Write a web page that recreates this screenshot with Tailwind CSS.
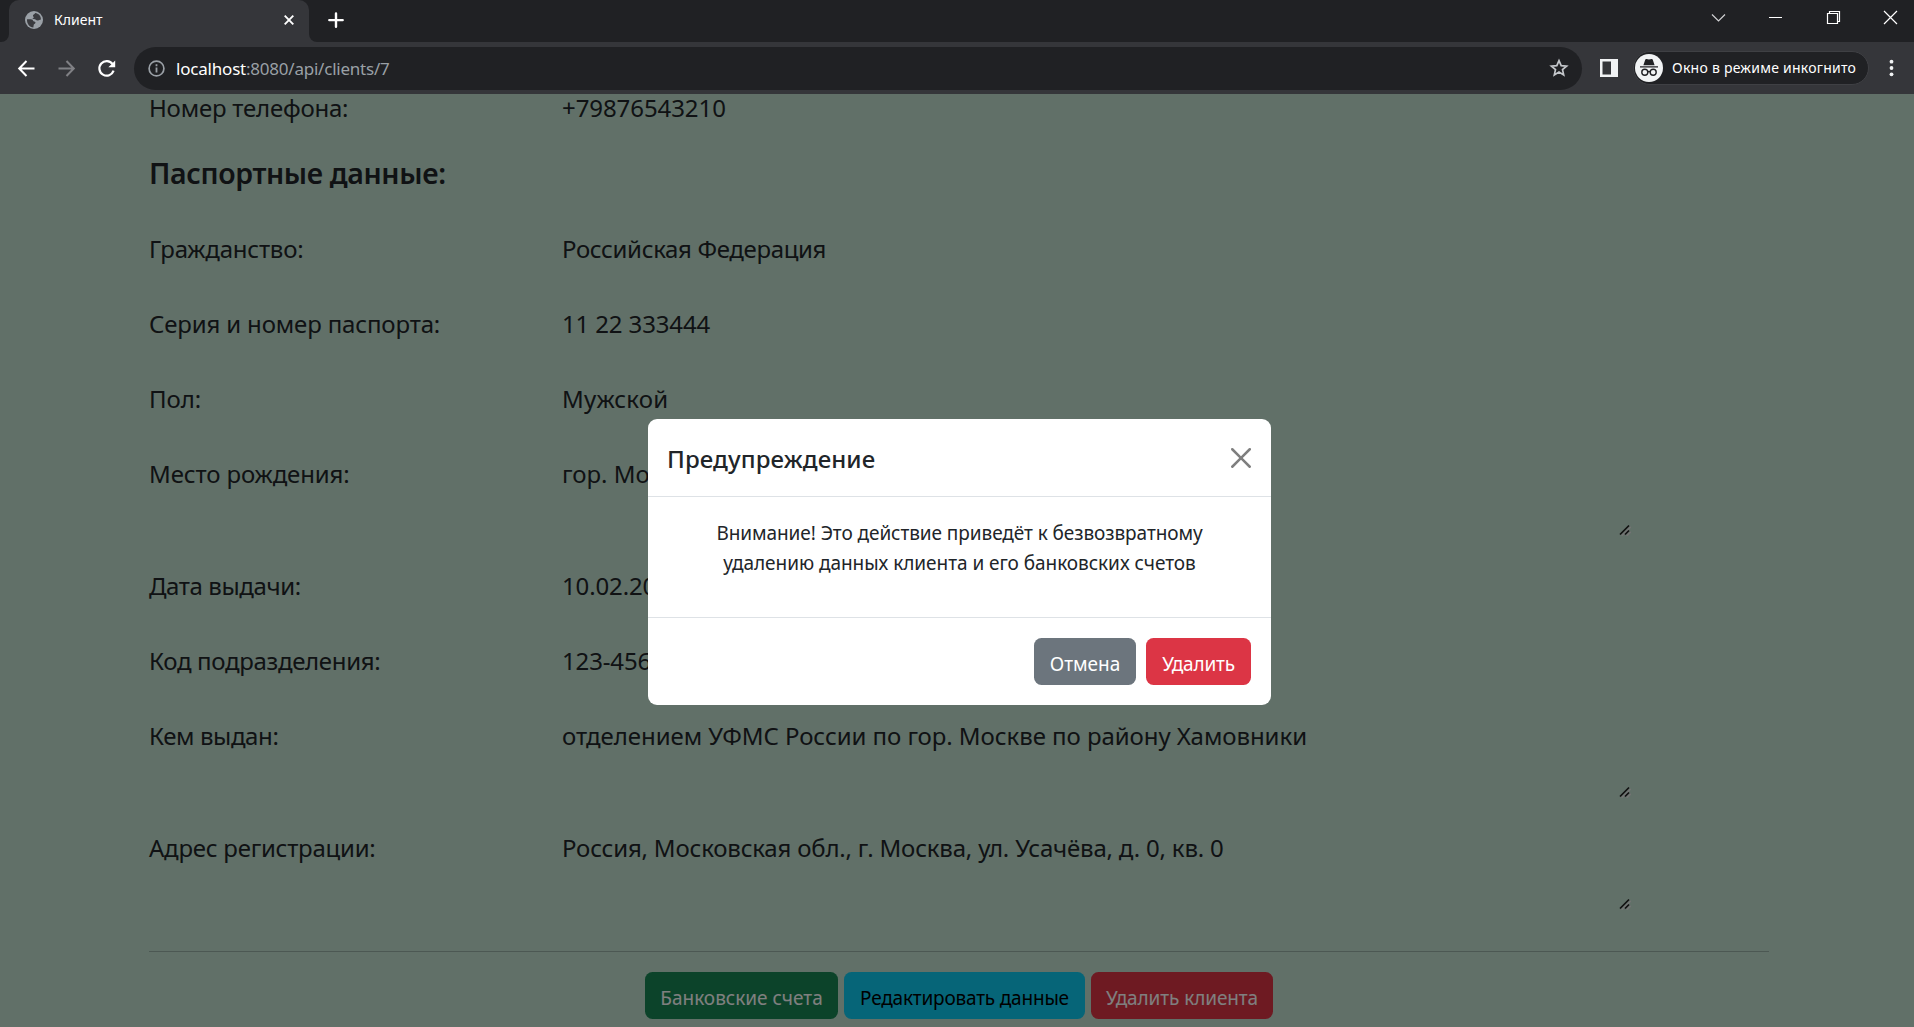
<!DOCTYPE html>
<html lang="ru">
<head>
<meta charset="utf-8">
<title>Клиент</title>
<script src="https://cdn.jsdelivr.net/npm/@tailwindcss/browser@4"></script>
</head>
<body class="flex h-[1027px] w-[1914px] flex-col overflow-hidden bg-[#c2e0d0] font-['Noto_Sans','Open_Sans',sans-serif] text-[#212529]">

<!-- Tab strip -->
<header class="flex h-[42px] shrink-0 bg-[#202124] text-white">
  <div class="w-[9px] bg-[#35363a]"><div class="h-full rounded-br-[8px] bg-[#202124]"></div></div>
  <div class="flex h-full w-[300px] items-center rounded-t-[10px] bg-[#35363a] pb-[2px] pl-4 pr-[14px]">
    <svg class="size-[18px] shrink-0" viewBox="0 0 18 18"><circle cx="9" cy="9" r="9" fill="#9aa0a6"/><path d="M2 8.200C3.500 8.300 5.500 8 7 8.600c1.300.5.900 1.900 2.200 2 1 .1 1.500.6 1.200 1.500-.3 1-1.500.9-1.700 2-.1.800-.2 1.500-.4 2.300C4.600 16 1.700 13 2 8.200ZM10.200 2C9.800 3 8.300 3.300 8 4.300c-.300 1 .8 1.300.7 2.200-.1.800-1.100.8-1.200 1.400.9.300 2.200 0 3 .700.6.600 1.500 1 2.500.9 1.100-.1 1.700-.8 2.900-.9C16.100 5 13.500 2.300 10.200 2Z" fill="#3a3b3f"/></svg>
    <span class="ml-[11px] grow text-[14px] leading-5">Клиент</span>
    <svg class="size-3" viewBox="0 0 12 12" stroke="#fff" stroke-width="1.9"><path d="M1.700 1.700 10.300 10.300M10.300 1.700 1.700 10.300"/></svg>
  </div>
  <div class="w-[10px] bg-[#35363a]"><div class="h-full rounded-bl-[8px] bg-[#202124]"></div></div>
  <svg class="ml-[9px] mt-3 size-4" viewBox="0 0 16 16" stroke="#fff" stroke-width="2.400" stroke-linecap="round"><path d="M8 1.400V14.800M1.300 8.100H14.700"/></svg>
  <div class="ml-auto flex items-start gap-[42.500px] pr-[16px] pt-[10px]">
    <svg class="size-[15px]" viewBox="0 0 15 15" fill="none" stroke="#d0d1d3" stroke-width="1.200"><path d="M1 4.500 7.500 11 14 4.500"/></svg>
    <svg class="size-[15px]" viewBox="0 0 15 15" stroke="#fff"><path d="M1 7.500H14"/></svg>
    <svg class="size-[15px]" viewBox="0 0 15 15" fill="none" stroke="#fff" stroke-width="1.200"><path d="M1.500 3.500H11.500V13.500H1.500ZM3.500 3.500V1.500H13.500V11.500H11.500"/></svg>
    <svg class="size-[15px]" viewBox="0 0 15 15" stroke="#fff" stroke-width="1.200"><path d="M1 1 14 14M14 1 1 14"/></svg>
  </div>
</header>

<!-- Toolbar -->
<nav class="flex h-[52px] shrink-0 items-center bg-[#35363a] pl-[17px] pr-[14px]">
  <div class="flex gap-[21px]">
    <svg class="size-[19px]" viewBox="0 0 19 19" fill="none" stroke="#fff" stroke-width="2"><path d="M17.500 9.500H2.500M9.500 2 2.200 9.500 9.500 17"/></svg>
    <svg class="size-[19px]" viewBox="0 0 19 19" fill="none" stroke="#808185" stroke-width="2"><path d="M1.500 9.500H16.500M9.500 2 16.800 9.500 9.500 17"/></svg>
    <svg class="size-[19px]" viewBox="0 0 19 19"><path d="M15.600 5.100A7.300 7.300 0 1 0 16.600 11.700" fill="none" stroke="#fff" stroke-width="2.200"/><path d="M18.200 1.500V8.200H11.400Z" fill="#fff"/></svg>
  </div>
  <div class="ml-[18px] flex h-[43px] w-[1448px] items-center rounded-full bg-[#202124] pl-[14px] pr-[13px]">
    <svg class="size-[17px]" viewBox="0 0 17 17"><circle cx="8.500" cy="8.500" r="7.400" fill="none" stroke="#9aa0a6" stroke-width="1.700"/><path d="M7.600 7.600h1.800v5H7.600ZM7.600 4.300h1.800v1.900H7.600Z" fill="#9aa0a6"/></svg>
    <p class="ml-[11px] grow pt-px text-[17px] leading-6 text-[#9aa0a6]"><span class="tracking-[-0.2px] text-white">localhost</span><span class="tracking-[-0.23px]">:8080/api/clients/7</span></p>
    <svg class="size-5" viewBox="0 0 20 20" fill="none" stroke="#c4c7cb" stroke-width="1.700"><path d="M10 2.700 12.200 7.600 17.600 8.100 13.500 11.600 14.700 16.900 10 14.100 5.300 16.900 6.500 11.600 2.400 8.100 7.800 7.600Z"/></svg>
  </div>
  <svg class="ml-[18px] size-[18px]" viewBox="0 0 18 18"><path d="M0 0H18V18H0ZM2.500 2.500V15.500H11V2.500Z" fill="#f1f3f4" fill-rule="evenodd"/></svg>
  <div class="ml-[15px] flex h-[34px] w-[236px] items-center rounded-full border border-[#3f4044] bg-[#202124]">
    <svg class="ml-px size-7" viewBox="0 0 28 28"><circle cx="14" cy="14" r="14" fill="#f1f3f4"/><path d="M5 12.200H23V13.500H5ZM8.400 11.200 10.300 5.600c.2-.6.700-.8 1.300-.6l2.400.5 2.400-.5c.600-.200 1.100 0 1.300.600l1.900 5.600Z" fill="#202124"/><g fill="none" stroke="#202124" stroke-width="1.400"><circle cx="9.800" cy="18.300" r="3"/><circle cx="18.200" cy="18.300" r="3"/><path d="M12.800 17.800q1.200-.7 2.400 0"/></g></svg>
    <span class="ml-[9px] whitespace-nowrap text-[14px] leading-5 tracking-[0.25px] text-white">Окно в режиме инкогнито</span>
  </div>
  <svg class="ml-auto h-[18px] w-[17px]" viewBox="0 0 17 18" fill="#f1f3f4"><circle cx="8.500" cy="2.700" r="1.900"/><circle cx="8.500" cy="9" r="1.900"/><circle cx="8.500" cy="15.300" r="1.900"/></svg>
</nav>

<!-- Page -->
<div class="relative grow">
  <main class="ml-[149px] w-[1620px] text-[24px] leading-[37px]">
    <dl class="flex h-[27px] items-center"><dt class="w-[413px] tracking-[-0.21px]">Номер телефона:</dt><dd class="tracking-[-0.08px]">+79876543210</dd></dl>
    <h4 class="mt-[14px] h-[76px] text-[28.5px] font-semibold leading-[76px] tracking-[-0.36px]">Паспортные данные:</h4>
    <dl>
      <div class="flex h-[75px] items-center"><dt class="w-[413px] tracking-[-0.22px]">Гражданство:</dt><dd class="tracking-[-0.35px]">Российская Федерация</dd></div>
      <div class="flex h-[75px] items-center"><dt class="w-[413px] tracking-[-0.15px]">Серия и номер паспорта:</dt><dd class="tracking-[-0.14px]">11 22 333444</dd></div>
      <div class="flex h-[75px] items-center"><dt class="w-[413px] tracking-[-0.1px]">Пол:</dt><dd class="tracking-[0.2px]">Мужской</dd></div>
      <div class="flex h-[112px] pt-[19px]"><dt class="w-[413px] tracking-[-0.13px]">Место рождения:</dt><dd class="flex w-[1069px] items-end justify-between"><span class="self-start">гор. Москва</span><svg class="mb-[12px] size-[12px]" viewBox="0 0 12 12"><path d="M2 11 11 2M7 11 11 7" stroke="#e8e8e8" stroke-width="1.500" transform="translate(.7 .9)"/><path d="M1 10.500 10 1.500M6 10.500 10 6.500" stroke="#222" stroke-width="1.700"/></svg></dd></div>
      <div class="flex h-[75px] items-center"><dt class="w-[413px] tracking-[-0.4px]">Дата выдачи:</dt><dd class="tracking-[-0.14px]">10.02.2020</dd></div>
      <div class="flex h-[75px] items-center"><dt class="w-[413px] tracking-[-0.32px]">Код подразделения:</dt><dd class="tracking-[-0.14px]">123-456</dd></div>
      <div class="flex h-[112px] pt-[19px]"><dt class="w-[413px] tracking-[-0.38px]">Кем выдан:</dt><dd class="flex w-[1069px] items-end justify-between"><span class="self-start tracking-[-0.06px]">отделением УФМС России по гор. Москве по району Хамовники</span><svg class="mb-[12px] size-[12px]" viewBox="0 0 12 12"><path d="M2 11 11 2M7 11 11 7" stroke="#e8e8e8" stroke-width="1.500" transform="translate(.7 .9)"/><path d="M1 10.500 10 1.500M6 10.500 10 6.500" stroke="#222" stroke-width="1.700"/></svg></dd></div>
      <div class="flex h-[112px] pt-[19px]"><dt class="w-[413px] tracking-[-0.24px]">Адрес регистрации:</dt><dd class="flex w-[1069px] items-end justify-between"><span class="self-start tracking-[-0.19px]">Россия, Московская обл., г. Москва, ул. Усачёва, д. 0, кв. 0</span><svg class="mb-[12px] size-[12px]" viewBox="0 0 12 12"><path d="M2 11 11 2M7 11 11 7" stroke="#e8e8e8" stroke-width="1.500" transform="translate(.7 .9)"/><path d="M1 10.500 10 1.500M6 10.500 10 6.500" stroke="#222" stroke-width="1.700"/></svg></dd></div>
    </dl>
    <hr class="mt-[29px] border-[#212529]/25">
    <div class="mt-5 flex justify-center gap-[6px] text-[19px] leading-[49px] text-white">
      <button class="h-[47px] w-[193px] rounded-[7.5px] bg-[#198754] pt-0.5">Банковские счета</button>
      <button class="h-[47px] w-[241px] rounded-[7.5px] bg-[#0dcaf0] pt-0.5 tracking-[-0.2px] text-black">Редактировать данные</button>
      <button class="h-[47px] w-[182px] rounded-[7.5px] bg-[#dc3545] pt-0.5 tracking-[-0.1px]">Удалить клиента</button>
    </div>
  </main>

  <!-- Modal -->
  <div class="absolute inset-0 bg-black/50 pl-[648px] pt-[325px]">
    <section class="flex h-[286px] w-[623px] flex-col overflow-hidden rounded-[9px] bg-white" role="dialog">
      <div class="flex h-[78px] items-center justify-between border-b border-[#dee2e6] px-5">
        <h5 class="-ml-px pt-[3px] text-[24px] font-medium leading-[38px] tracking-[0.1px]">Предупреждение</h5>
        <svg class="size-5" viewBox="0 0 16 16" fill="#7f7f7f"><path d="M.293.293a1 1 0 0 1 1.414 0L8 6.586 14.293.293a1 1 0 1 1 1.414 1.414L9.414 8l6.293 6.293a1 1 0 0 1-1.414 1.414L8 9.414l-6.293 6.293a1 1 0 0 1-1.414-1.414L6.586 8 .293 1.707a1 1 0 0 1 0-1.414z"/></svg>
      </div>
      <div class="h-[120px] pt-[21px] text-center text-[19px] leading-[30px]">
        <p class="tracking-[-0.07px]">Внимание! Это действие приведёт к безвозвратному</p>
        <p class="tracking-[-0.04px]">удалению данных клиента и его банковских счетов</p>
      </div>
      <div class="flex grow justify-end gap-[10px] border-t border-[#dee2e6] pr-5 pt-5 text-[19px] leading-[49px] text-white">
        <button class="h-[47px] w-[102px] rounded-[7.5px] bg-[#6c757d] pt-0.5">Отмена</button>
        <button class="h-[47px] w-[105px] rounded-[7.5px] bg-[#dc3545] pt-0.5 tracking-[-0.2px]">Удалить</button>
      </div>
    </section>
  </div>
</div>
</body>
</html>
